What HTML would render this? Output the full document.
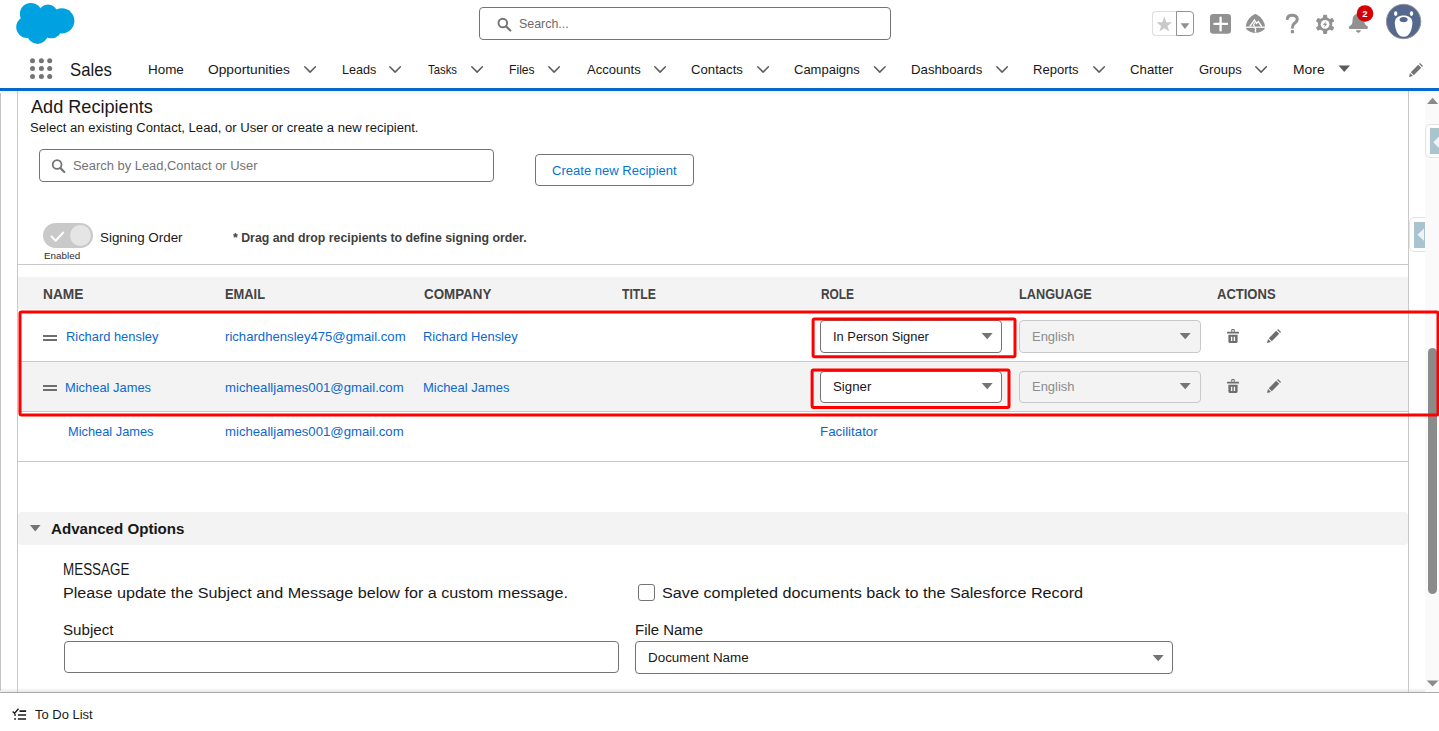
<!DOCTYPE html>
<html><head><meta charset="utf-8"><title>Sales</title>
<style>
html,body{margin:0;padding:0;}
body{width:1439px;height:731px;overflow:hidden;position:relative;background:#fff;font-family:"Liberation Sans",sans-serif;color:#181818;}
.t{position:absolute;transform-origin:0 0;white-space:nowrap;line-height:20px;height:20px;font-family:"Liberation Sans",sans-serif;}
.a{position:absolute;box-sizing:border-box;}
svg{position:absolute;overflow:visible;}
.inp{position:absolute;box-sizing:border-box;background:#fff;border:1px solid #747474;border-radius:4px;}
.dis{background:#f3f3f3;border-color:#c9c9c9;}

</style></head>
<body>
<!-- ===== header ===== -->
<div class="a" id="blueline" style="left:0;top:88px;width:1439px;height:3px;background:#0568cf"></div>
<div class="a" style="left:1px;top:91px;width:1438px;height:5px;background:linear-gradient(#f0f0f0,#ffffff)"></div>
<!-- logo -->
<svg id="logo" style="left:0;top:0" width="90" height="48" viewBox="0 0 90 48">
 <g fill="#00a1e0">
  <circle cx="30.9" cy="13.9" r="11"/><circle cx="48" cy="14.4" r="9.9"/><circle cx="61.8" cy="20.8" r="12.6"/>
  <circle cx="27.1" cy="27.1" r="10.9"/><circle cx="37.5" cy="33.4" r="10.5"/><circle cx="51.4" cy="27.8" r="10.5"/>
  <circle cx="42" cy="23" r="10"/>
 </g>
</svg>
<!-- app launcher -->
<svg id="launcher" style="left:0;top:48px" width="60" height="40" viewBox="0 48 60 40">
 <g fill="#747474">
  <circle cx="32.5" cy="60.7" r="2.5"/><circle cx="41.4" cy="60.7" r="2.5"/><circle cx="49.7" cy="60.7" r="2.5"/>
  <circle cx="32.5" cy="68.5" r="2.5"/><circle cx="41.4" cy="68.5" r="2.5"/><circle cx="49.7" cy="68.5" r="2.5"/>
  <circle cx="32.5" cy="76.5" r="2.5"/><circle cx="41.4" cy="76.5" r="2.5"/><circle cx="49.7" cy="76.5" r="2.5"/>
 </g>
</svg>
<!-- global search -->
<div class="inp" style="left:479px;top:7px;width:412px;height:33px"></div>
<svg style="left:497px;top:17.4px" width="15" height="15" viewBox="0 0 15 15"><circle cx="5.8" cy="6" r="4.3" fill="none" stroke="#747474" stroke-width="1.9"/><path d="M9 9.2 L13.3 13.5" stroke="#747474" stroke-width="2.2" stroke-linecap="round"/></svg>
<!-- nav chevrons -->
<svg id="chev" style="left:0;top:48px" width="1439" height="40" viewBox="0 48 1439 40">
 <g fill="none" stroke="#5c5c5c" stroke-width="1.5" stroke-linecap="round" stroke-linejoin="round">
  <path d="M304.8 66.8 l5.3 5.3 l5.3 -5.3"/><path d="M389.8 66.8 l5.3 5.3 l5.3 -5.3"/><path d="M471.8 66.8 l5.3 5.3 l5.3 -5.3"/>
  <path d="M548.8 66.8 l5.3 5.3 l5.3 -5.3"/><path d="M654.8 66.8 l5.3 5.3 l5.3 -5.3"/><path d="M757.8 66.8 l5.3 5.3 l5.3 -5.3"/>
  <path d="M874.5 66.8 l5.3 5.3 l5.3 -5.3"/><path d="M996.8 66.8 l5.3 5.3 l5.3 -5.3"/><path d="M1093.8 66.8 l5.3 5.3 l5.3 -5.3"/>
  <path d="M1255.8 66.8 l5.3 5.3 l5.3 -5.3"/>
 </g>
 <path d="M1338.5 65.5 h11.5 l-5.75 6.5z" fill="#5c5c5c"/>
</svg>
<!-- ===== content frame ===== -->
<div class="a" style="left:1px;top:688px;width:1438px;height:4px;background:linear-gradient(#ffffff,#e6e6e6)"></div>
<div class="a" style="left:0;top:93px;width:1px;height:598px;background:#c4c4c4"></div>
<div class="a" style="left:17px;top:91px;width:1px;height:601px;background:#c9c9c9"></div>
<div class="a" style="left:1408px;top:91px;width:1px;height:601px;background:#c9c9c9"></div>
<div class="a" style="left:1425px;top:91px;width:14px;height:601px;background:#fafafa"></div>
<div class="a" style="left:0;top:692px;width:1439px;height:1px;background:#aaaaaa"></div>
<!-- add recipients -->
<div class="inp" style="left:39px;top:149px;width:455px;height:33px"></div>
<div class="inp" style="left:535px;top:154px;width:159px;height:32px"></div>
<div class="a" style="left:18px;top:264px;width:1390px;height:1px;background:#c9c9c9"></div>
<!-- toggle -->
<div class="a" style="left:43px;top:223px;width:50px;height:25px;border-radius:13px;background:#c9c9c9"></div>
<div class="a" style="left:70px;top:225px;width:21px;height:21px;border-radius:11px;background:#e5e5e5"></div>
<!-- table -->
<div class="a" style="left:18px;top:277px;width:1390px;height:32px;background:#f3f3f3"></div>
<div class="a" style="left:18px;top:361px;width:1390px;height:1px;background:#c9c9c9"></div>
<div class="a" style="left:18px;top:362px;width:1390px;height:49px;background:#f3f3f3"></div>
<div class="a" style="left:18px;top:411px;width:1390px;height:1px;background:#c9c9c9"></div>
<div class="a" style="left:18px;top:461px;width:1390px;height:1px;background:#c9c9c9"></div>
<!-- selects -->
<div class="inp" style="left:820px;top:320px;width:182px;height:33px"></div>
<div class="inp" style="left:820px;top:371px;width:182px;height:32px"></div>
<div class="inp dis" style="left:1019px;top:320px;width:182px;height:33px"></div>
<div class="inp dis" style="left:1019px;top:371px;width:182px;height:32px"></div>
<!-- advanced -->
<div class="a" style="left:18px;top:512px;width:1390px;height:33px;background:#f3f3f3;border-radius:4px"></div>
<div class="inp" style="left:64px;top:641px;width:555px;height:32px"></div>
<div class="inp" style="left:635px;top:641px;width:538px;height:33px"></div>
<div class="inp" style="left:638px;top:584px;width:17px;height:17px;border-radius:3px"></div>
<!-- ===== header right icons ===== -->
<div class="a" style="left:1152px;top:11px;width:25px;height:25px;border:1px solid #dedede;border-right:none;border-radius:4px 0 0 4px;background:#fff"></div>
<div class="a" style="left:1176px;top:11px;width:18px;height:25px;border:1px solid #939393;border-radius:0 4px 4px 0;background:#fff"></div>
<svg style="left:1156px;top:16px" width="17" height="17" viewBox="0 0 17 17"><path d="M8.3 0.6 L10.3 6.2 L16.1 6.3 L11.5 9.9 L13.2 15.6 L8.3 12.2 L3.4 15.6 L5.1 9.9 L0.5 6.3 L6.3 6.2 Z" fill="#c9c9c9"/></svg>
<svg style="left:1180px;top:23px" width="10" height="7" viewBox="0 0 10 7"><path d="M0.6 0.3 H9.4 L5 6 Z" fill="#919191"/></svg>
<!-- plus -->
<svg style="left:1210px;top:14px" width="21" height="20" viewBox="0 0 21 20"><rect x="0" y="0" width="21" height="19.8" rx="3.2" fill="#919191"/><path d="M4.4 9.9 H17 M10.6 3.6 V16.4" stroke="#fff" stroke-width="2.3" stroke-linecap="round"/></svg>
<!-- trailhead -->
<svg style="left:1245px;top:13px" width="21" height="21" viewBox="0 0 21 21">
 <path d="M10.4 0.9 C12.6 1.6 17.2 4.6 19.3 10.2 C20.6 13.6 19.9 15.8 18.6 17 C16.2 18.9 12.6 19.9 10.4 19.9 C8.2 19.9 4.6 18.9 2.2 17 C0.9 15.8 0.2 13.6 1.5 10.2 C3.6 4.6 8.2 1.6 10.4 0.9 Z" fill="#919191"/>
 <path d="M0.5 14.2 H20.3" stroke="#fff" stroke-width="1.3"/>
 <path d="M4.7 13.6 L9.4 7 L11.5 10.4 L13.3 8.6 L16.7 13.6" fill="none" stroke="#fff" stroke-width="1.4" stroke-linejoin="miter"/>
 <path d="M9.9 9.6 L8.4 12.2 L9.8 13.6" fill="none" stroke="#fff" stroke-width="1.1"/>
 <path d="M9.6 14.4 L10.8 16.4 L10.2 18 L11.2 19.6" fill="none" stroke="#fff" stroke-width="1.2"/>
</svg>
<!-- question -->
<svg style="left:1285px;top:13px" width="15" height="21" viewBox="0 0 15 21"><path d="M2.3 5.6 C2.9 2.9 5 2.3 7.2 2.3 C10 2.3 12.3 3.7 12.3 6.3 C12.3 8.4 10.9 9.3 9.5 10.3 C8.2 11.2 7.5 12 7.5 14.3" fill="none" stroke="#919191" stroke-width="3" stroke-linecap="round"/><rect x="5.8" y="17.1" width="3.2" height="3.1" rx="0.8" fill="#919191"/></svg>
<!-- gear -->
<svg style="left:1315px;top:14px" width="20" height="21" viewBox="0 0 20 21">
 <g transform="translate(10.1 10.3)" fill="#919191">
  <circle r="7.1"/>
  <g id="tooth"><rect x="-2.1" y="-9.6" width="4.2" height="5" rx="1.2"/></g>
  <rect x="-2.1" y="-9.6" width="4.2" height="5" rx="1.2" transform="rotate(60)"/>
  <rect x="-2.1" y="-9.6" width="4.2" height="5" rx="1.2" transform="rotate(120)"/>
  <rect x="-2.1" y="-9.6" width="4.2" height="5" rx="1.2" transform="rotate(180)"/>
  <rect x="-2.1" y="-9.6" width="4.2" height="5" rx="1.2" transform="rotate(240)"/>
  <rect x="-2.1" y="-9.6" width="4.2" height="5" rx="1.2" transform="rotate(300)"/>
  <circle r="4.4" fill="#fff"/>
  <path d="M1.1 -3.4 L-2.2 0.6 H-0.2 L-1.1 3.4 L2.2 -0.6 H0.2 Z" fill="#919191"/>
 </g>
</svg>
<!-- bell -->
<svg style="left:1348px;top:13px" width="21" height="21" viewBox="0 0 21 21">
 <path d="M10.4 0.8 C6.4 0.8 4.6 3.8 4.6 7 C4.6 10 3.9 12.2 1.4 13.3 C0.6 13.7 0.8 15.9 1.7 15.9 H19.1 C20 15.9 20.2 13.7 19.4 13.3 C16.9 12.2 16.2 10 16.2 7 C16.2 3.8 14.4 0.8 10.4 0.8 Z" fill="#919191"/>
 <path d="M7.9 17.3 H12.9 C12.7 18.9 11.6 19.8 10.4 19.8 C9.2 19.8 8.1 18.9 7.9 17.3 Z" fill="#919191"/>
</svg>
<svg style="left:1355px;top:3px" width="20" height="20" viewBox="0 0 20 20"><circle cx="10" cy="10.45" r="8.3" fill="#d60000"/></svg>
<div class="t" style="left:1357px;top:5.5px;width:16px;height:16px;line-height:16px;text-align:center;font-size:9.6px;font-weight:700;color:#fff">2</div>
<!-- avatar -->
<svg style="left:1385px;top:3px" width="38" height="38" viewBox="0 0 38 38">
 <circle cx="18.6" cy="18.5" r="17.2" fill="#54698d" stroke="#94979c" stroke-width="1"/>
 <ellipse cx="10.7" cy="10.6" rx="1.7" ry="2.3" fill="#fff"/><ellipse cx="26.5" cy="10.6" rx="1.7" ry="2.3" fill="#fff"/>
 <path d="M18.6 12.4 C23.4 12.4 27.4 15 27.4 19.4 C27.4 24.6 25.2 33.8 18.6 33.8 C12 33.8 9.8 24.6 9.8 19.4 C9.8 15 13.8 12.4 18.6 12.4 Z" fill="#fff"/>
 <ellipse cx="18.6" cy="16.6" rx="4" ry="2.6" fill="#54698d"/>
</svg>
<!-- nav pencil -->
<svg style="left:1409px;top:63px" width="14" height="14" viewBox="0 0 14 14" fill="#747474"><path d="M0 14 L1 10 L4 13 Z"/><path d="M1.8 9.2 L9.2 1.8 L12.2 4.8 L4.8 12.2 Z"/><path d="M10.1 0.9 L11 0 L14 3 L13.1 3.9 Z"/></svg>
<!-- ===== scrollbar & side tabs ===== -->
<svg style="left:1427px;top:97px" width="12" height="8" viewBox="0 0 12 8"><path d="M0 6.9 L5.6 0.8 L11.2 6.9 Z" fill="#8a8a8a"/></svg>
<svg style="left:1427px;top:680px" width="12" height="8" viewBox="0 0 12 8"><path d="M-0.2 0.5 L5.6 6.5 L11.4 0.5 Z" fill="#8a8a8a"/></svg>
<div class="a" style="left:1428px;top:348px;width:9px;height:246px;border-radius:4.5px;background:#8b8b8b"></div>
<div class="a" style="left:1425px;top:124px;width:20px;height:34px;border:1px solid #e3e3e3;border-radius:5px;background:#fdfdfd"></div>
<div class="a" style="left:1430px;top:128px;width:10px;height:26px;background:#a9c4cf"></div>
<svg style="left:1433px;top:134px" width="7" height="16" viewBox="0 0 7 16"><path d="M0.3 8.3 L7 1.5 V15 Z" fill="#eef3f5"/></svg>
<div class="a" style="left:1409px;top:217px;width:16px;height:35px;border:1px solid #e3e3e3;border-right:none;border-radius:5px 0 0 5px;background:#fdfdfd"></div>
<div class="a" style="left:1414px;top:222px;width:11px;height:26px;background:#a9c4cf"></div>
<svg style="left:1417px;top:228px" width="8" height="14" viewBox="0 0 8 14"><path d="M0.4 6.7 L7 0.6 V12.8 Z" fill="#eef3f5"/></svg>
<!-- ===== content icons ===== -->
<svg style="left:51px;top:158px" width="15" height="16" viewBox="0 0 15 16"><circle cx="6.1" cy="6.5" r="4.4" fill="none" stroke="#747474" stroke-width="1.8"/><path d="M9.4 9.9 L13.3 13.9" stroke="#747474" stroke-width="2.1" stroke-linecap="round"/></svg>
<svg style="left:50px;top:230px" width="16" height="14" viewBox="0 0 16 14"><path d="M1.6 6.4 L5.6 10.8 L13.2 2.6" fill="none" stroke="#fff" stroke-width="2" stroke-linecap="round" stroke-linejoin="round"/></svg>
<!-- hamburgers -->
<div class="a" style="left:43px;top:335px;width:14px;height:2px;background:#6e6e6e"></div>
<div class="a" style="left:43px;top:339px;width:14px;height:2px;background:#6e6e6e"></div>
<div class="a" style="left:43px;top:385px;width:14px;height:2px;background:#6e6e6e"></div>
<div class="a" style="left:43px;top:389px;width:14px;height:2px;background:#6e6e6e"></div>
<!-- select arrows -->
<svg style="left:981px;top:332px" width="13" height="8" viewBox="0 0 13 8"><path d="M0.7 0.9 H11.7 L6.2 7.2 Z" fill="#747474"/></svg>
<svg style="left:981px;top:382px" width="13" height="8" viewBox="0 0 13 8"><path d="M0.7 0.9 H11.7 L6.2 7.2 Z" fill="#747474"/></svg>
<svg style="left:1179px;top:332px" width="13" height="8" viewBox="0 0 13 8"><path d="M0.7 0.9 H11.7 L6.2 7.2 Z" fill="#747474"/></svg>
<svg style="left:1179px;top:382px" width="13" height="8" viewBox="0 0 13 8"><path d="M0.7 0.9 H11.7 L6.2 7.2 Z" fill="#747474"/></svg>
<svg style="left:1152px;top:654px" width="13" height="8" viewBox="0 0 13 8"><path d="M0.7 0.9 H11.7 L6.2 7.2 Z" fill="#747474"/></svg>
<svg style="left:29px;top:524px" width="13" height="8" viewBox="0 0 13 8"><path d="M0.9 0.9 H11.6 L6.25 7.4 Z" fill="#747474"/></svg>
<!-- trash / pencil -->
<svg style="left:1227px;top:329px" width="12" height="14" viewBox="0 0 12 14" fill="#6e6e6e"><path d="M4.2 2.7 V1.3 C4.2 0.5 4.7 0 5.4 0 H6.6 C7.3 0 7.8 0.5 7.8 1.3 V2.7 H6.7 V1.4 C6.7 1.1 6.6 1 6.4 1 H5.6 C5.4 1 5.3 1.1 5.3 1.4 V2.7 Z"/><rect x="0" y="2.7" width="12" height="1.8" rx="0.5"/><path d="M1.4 5.7 H10.6 V12.6 C10.6 13.4 10.1 13.9 9.4 13.9 H2.6 C1.9 13.9 1.4 13.4 1.4 12.6 Z M3.9 7.7 V12 H5.3 V7.7 Z M6.7 7.7 V12 H8.1 V7.7 Z" fill-rule="evenodd"/></svg>
<svg style="left:1227px;top:379px" width="12" height="14" viewBox="0 0 12 14" fill="#6e6e6e"><path d="M4.2 2.7 V1.3 C4.2 0.5 4.7 0 5.4 0 H6.6 C7.3 0 7.8 0.5 7.8 1.3 V2.7 H6.7 V1.4 C6.7 1.1 6.6 1 6.4 1 H5.6 C5.4 1 5.3 1.1 5.3 1.4 V2.7 Z"/><rect x="0" y="2.7" width="12" height="1.8" rx="0.5"/><path d="M1.4 5.7 H10.6 V12.6 C10.6 13.4 10.1 13.9 9.4 13.9 H2.6 C1.9 13.9 1.4 13.4 1.4 12.6 Z M3.9 7.7 V12 H5.3 V7.7 Z M6.7 7.7 V12 H8.1 V7.7 Z" fill-rule="evenodd"/></svg>
<svg style="left:1267px;top:329px" width="14" height="14" viewBox="0 0 14 14" fill="#6e6e6e"><path d="M0 14 L1 10 L4 13 Z"/><path d="M1.8 9.2 L9.2 1.8 L12.2 4.8 L4.8 12.2 Z"/><path d="M10.1 0.9 L11 0 L14 3 L13.1 3.9 Z"/></svg>
<svg style="left:1267px;top:379px" width="14" height="14" viewBox="0 0 14 14" fill="#6e6e6e"><path d="M0 14 L1 10 L4 13 Z"/><path d="M1.8 9.2 L9.2 1.8 L12.2 4.8 L4.8 12.2 Z"/><path d="M10.1 0.9 L11 0 L14 3 L13.1 3.9 Z"/></svg>
<!-- todo icon -->
<svg style="left:12px;top:708px" width="15" height="13" viewBox="0 0 15 13"><g stroke="#1c1c1c" stroke-width="1.6" fill="none"><path d="M7.5 3.1 H14.1 M5.9 7 H14.1 M5.9 11 H14.1"/></g><path d="M0.6 3.5 L2.6 5.2 L6.5 0.8" fill="none" stroke="#1c1c1c" stroke-width="1.4"/><g fill="#1c1c1c"><rect x="2.2" y="6.2" width="1.7" height="1.6"/><rect x="2.2" y="10.2" width="1.7" height="1.6"/></g></svg>
<!-- red annotation -->
<svg id="redanno" style="left:0;top:0;pointer-events:none" width="1439" height="731" viewBox="0 0 1439 731">
 <g fill="none" stroke="#ff0000" stroke-width="3">
  <rect x="20" y="312" width="1418" height="103" rx="1.5"/>
  <rect x="813.1" y="319" width="201.9" height="37.8" rx="1.5"/>
  <rect x="812.1" y="370" width="196.9" height="37.6" rx="1.5"/>
 </g>
</svg>

<!-- text -->
<span class="t" id="t0" style="left:69.52px;top:60.30px;font-size:17.80px;font-weight:400;color:#181818;transform:scaleX(0.9394)">Sales</span>
<span class="t" id="t1" style="left:148.02px;top:59.50px;font-size:12.60px;font-weight:400;color:#181818;transform:scaleX(1.0655)">Home</span>
<span class="t" id="t2" style="left:207.95px;top:59.50px;font-size:12.60px;font-weight:400;color:#181818;transform:scaleX(1.0923)">Opportunities</span>
<span class="t" id="t3" style="left:341.50px;top:59.50px;font-size:12.60px;font-weight:400;color:#181818;transform:scaleX(1.0028)">Leads</span>
<span class="t" id="t4" style="left:427.80px;top:59.50px;font-size:12.60px;font-weight:400;color:#181818;transform:scaleX(0.8998)">Tasks</span>
<span class="t" id="t5" style="left:508.51px;top:59.50px;font-size:12.60px;font-weight:400;color:#181818;transform:scaleX(0.9666)">Files</span>
<span class="t" id="t6" style="left:586.80px;top:59.50px;font-size:12.60px;font-weight:400;color:#181818;transform:scaleX(1.0361)">Accounts</span>
<span class="t" id="t7" style="left:691.13px;top:59.50px;font-size:12.60px;font-weight:400;color:#181818;transform:scaleX(1.0446)">Contacts</span>
<span class="t" id="t8" style="left:793.93px;top:59.50px;font-size:12.60px;font-weight:400;color:#181818;transform:scaleX(1.0321)">Campaigns</span>
<span class="t" id="t9" style="left:911.46px;top:59.50px;font-size:12.60px;font-weight:400;color:#181818;transform:scaleX(1.0495)">Dashboards</span>
<span class="t" id="t10" style="left:1033.46px;top:59.50px;font-size:12.60px;font-weight:400;color:#181818;transform:scaleX(1.0350)">Reports</span>
<span class="t" id="t11" style="left:1129.90px;top:59.50px;font-size:12.60px;font-weight:400;color:#181818;transform:scaleX(1.0531)">Chatter</span>
<span class="t" id="t12" style="left:1198.53px;top:59.50px;font-size:12.60px;font-weight:400;color:#181818;transform:scaleX(1.0321)">Groups</span>
<span class="t" id="t13" style="left:1293.02px;top:59.50px;font-size:12.60px;font-weight:400;color:#181818;transform:scaleX(1.1039)">More</span>
<span class="t" id="t14" style="left:518.74px;top:13.70px;font-size:12.60px;font-weight:400;color:#6b6b6b;transform:scaleX(0.9857)">Search...</span>
<span class="t" id="t15" style="left:31.00px;top:96.70px;font-size:18.60px;font-weight:400;color:#181818;transform:scaleX(0.9740)">Add Recipients</span>
<span class="t" id="t16" style="left:30.45px;top:117.90px;font-size:12.50px;font-weight:400;color:#181818;transform:scaleX(1.0470)">Select an existing Contact, Lead, or User or create a new recipient.</span>
<span class="t" id="t17" style="left:72.69px;top:156.30px;font-size:12.50px;font-weight:400;color:#747474;transform:scaleX(1.0330)">Search by Lead,Contact or User</span>
<span class="t" id="t18" style="left:552.12px;top:161.10px;font-size:12.50px;font-weight:400;color:#0176d3;transform:scaleX(1.0430)">Create new Recipient</span>
<span class="t" id="t19" style="left:100.25px;top:227.90px;font-size:12.90px;font-weight:400;color:#181818;transform:scaleX(1.0381)">Signing Order</span>
<span class="t" id="t20" style="left:43.69px;top:245.82px;font-size:9.70px;font-weight:400;color:#2e2e2e;transform:scaleX(1.0154)">Enabled</span>
<span class="t" id="t21" style="left:233.00px;top:228.10px;font-size:12.60px;font-weight:700;color:#3e3e3c;transform:scaleX(0.9781)">* Drag and drop recipients to define signing order.</span>
<span class="t" id="t22" style="left:43.27px;top:285.00px;font-size:13.80px;font-weight:700;color:#444;transform:scaleX(0.9954)">NAME</span>
<span class="t" id="t23" style="left:224.75px;top:285.00px;font-size:13.80px;font-weight:700;color:#444;transform:scaleX(0.9336)">EMAIL</span>
<span class="t" id="t24" style="left:423.58px;top:285.00px;font-size:13.80px;font-weight:700;color:#444;transform:scaleX(0.9685)">COMPANY</span>
<span class="t" id="t25" style="left:622.00px;top:285.00px;font-size:13.80px;font-weight:700;color:#444;transform:scaleX(0.8865)">TITLE</span>
<span class="t" id="t26" style="left:820.70px;top:285.00px;font-size:13.80px;font-weight:700;color:#444;transform:scaleX(0.8627)">ROLE</span>
<span class="t" id="t27" style="left:1018.80px;top:285.00px;font-size:13.80px;font-weight:700;color:#444;transform:scaleX(0.9223)">LANGUAGE</span>
<span class="t" id="t28" style="left:1217.20px;top:285.00px;font-size:13.80px;font-weight:700;color:#444;transform:scaleX(0.9435)">ACTIONS</span>
<span class="t" id="t29" style="left:65.67px;top:327.40px;font-size:12.80px;font-weight:400;color:#0b68cf;transform:scaleX(1.0063)">Richard hensley</span>
<span class="t" id="t30" style="left:225.31px;top:327.40px;font-size:12.80px;font-weight:400;color:#0b68cf;transform:scaleX(1.0267)">richardhensley475@gmail.com</span>
<span class="t" id="t31" style="left:423.27px;top:327.40px;font-size:12.80px;font-weight:400;color:#0b68cf;transform:scaleX(1.0075)">Richard Hensley</span>
<span class="t" id="t32" style="left:65.27px;top:378.30px;font-size:12.80px;font-weight:400;color:#0b68cf;transform:scaleX(1.0083)">Micheal James</span>
<span class="t" id="t33" style="left:225.31px;top:378.30px;font-size:12.80px;font-weight:400;color:#0b68cf;transform:scaleX(1.0283)">michealljames001@gmail.com</span>
<span class="t" id="t34" style="left:423.27px;top:378.30px;font-size:12.80px;font-weight:400;color:#0b68cf;transform:scaleX(1.0131)">Micheal James</span>
<span class="t" id="t35" style="left:67.87px;top:421.50px;font-size:12.80px;font-weight:400;color:#0b68cf;transform:scaleX(1.0019)">Micheal James</span>
<span class="t" id="t36" style="left:225.31px;top:421.50px;font-size:12.80px;font-weight:400;color:#0b68cf;transform:scaleX(1.0283)">michealljames001@gmail.com</span>
<span class="t" id="t37" style="left:820.06px;top:421.50px;font-size:12.80px;font-weight:400;color:#0b68cf;transform:scaleX(1.0399)">Facilitator</span>
<span class="t" id="t38" style="left:833.32px;top:326.50px;font-size:12.50px;font-weight:400;color:#181818;transform:scaleX(1.0297)">In Person Signer</span>
<span class="t" id="t39" style="left:832.65px;top:376.70px;font-size:12.50px;font-weight:400;color:#181818;transform:scaleX(1.0600)">Signer</span>
<span class="t" id="t40" style="left:1032.06px;top:326.50px;font-size:12.50px;font-weight:400;color:#8c8c8c;transform:scaleX(1.0370)">English</span>
<span class="t" id="t41" style="left:1032.06px;top:376.70px;font-size:12.50px;font-weight:400;color:#8c8c8c;transform:scaleX(1.0370)">English</span>
<span class="t" id="t42" style="left:50.80px;top:518.60px;font-size:14.80px;font-weight:700;color:#181818;transform:scaleX(1.0210)">Advanced Options</span>
<span class="t" id="t43" style="left:63.22px;top:560.00px;font-size:15.80px;font-weight:400;color:#181818;transform:scaleX(0.8498)">MESSAGE</span>
<span class="t" id="t44" style="left:63.05px;top:583.18px;font-size:15.30px;font-weight:400;color:#181818;transform:scaleX(1.0565)">Please update the Subject and Message below for a custom message.</span>
<span class="t" id="t45" style="left:662.34px;top:583.44px;font-size:15.30px;font-weight:400;color:#181818;transform:scaleX(1.0582)">Save completed documents back to the Salesforce Record</span>
<span class="t" id="t46" style="left:63.35px;top:619.82px;font-size:15.30px;font-weight:400;color:#181818;transform:scaleX(0.9912)">Subject</span>
<span class="t" id="t47" style="left:635.31px;top:619.82px;font-size:15.30px;font-weight:400;color:#181818;transform:scaleX(0.9770)">File Name</span>
<span class="t" id="t48" style="left:647.80px;top:648.30px;font-size:12.50px;font-weight:400;color:#181818;transform:scaleX(1.0739)">Document Name</span>
<span class="t" id="t49" style="left:34.60px;top:704.70px;font-size:12.50px;font-weight:400;color:#181818;transform:scaleX(1.0362)">To Do List</span>
</body></html>
